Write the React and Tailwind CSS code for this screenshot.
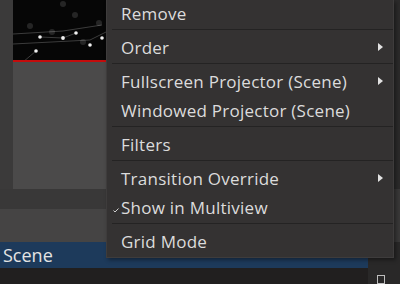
import React from 'react';

const items = [
  { label: 'Remove' },
  { sep: true },
  { label: 'Order', sub: true },
  { sep: true },
  { label: 'Fullscreen Projector (Scene)', sub: true },
  { label: 'Windowed Projector (Scene)' },
  { sep: true },
  { label: 'Filters' },
  { sep: true },
  { label: 'Transition Override', sub: true },
  { label: 'Show in Multiview', checked: true },
  { sep: true },
  { label: 'Grid Mode' },
];

const Preview = () => (
  <svg width="93" height="60" viewBox="0 0 93 60" className="block">
    <rect width="93" height="60" fill="#060606" />
    <g stroke="#5a5a5a" strokeWidth="0.8" fill="none" opacity="0.8">
      <path d="M0 44 L77 40 L93 32" />
      <path d="M0 34 L50 31 L89 25" />
      <path d="M23 51 L10 62" />
      <path d="M27 37 L50 38 L63 33" />
    </g>
    <g fill="#ffffff" opacity="0.12">
      <circle cx="17" cy="26" r="3" />
      <circle cx="39" cy="32" r="3" />
      <circle cx="62" cy="15" r="3" />
      <circle cx="86" cy="23" r="3" />
      <circle cx="50" cy="4" r="3" />
      <circle cx="70" cy="42" r="3" />
    </g>
    <g fill="#f0f0f0">
      <circle cx="27" cy="37" r="1.8" />
      <circle cx="50" cy="38" r="1.9" />
      <circle cx="63" cy="33" r="1.8" />
      <circle cx="89" cy="38" r="1.8" />
      <circle cx="77" cy="45" r="1.8" />
      <circle cx="23" cy="51" r="1.8" />
    </g>
  </svg>
);

const Arrow = () => (
  <svg width="5" height="8" viewBox="0 0 5 8" className="block">
    <path d="M0 0 L5 4 L0 8 Z" fill="#e2e2e2" />
  </svg>
);

const Check = () => (
  <svg width="6" height="5" viewBox="0 0 6 5" className="block">
    <path d="M0.5 2.5 L2 4 L5.5 0.5" stroke="#d0d0d0" strokeWidth="1" fill="none" />
  </svg>
);

const ContextMenu = () => (
  <div className="absolute left-[106px] top-0 w-[288px] h-[258px] bg-[#343232] border-l border-r border-b border-[#3e3c3c] shadow-[2px_2px_4px_rgba(0,0,0,0.4)]">
    {items.map((item, i) =>
      item.sep ? (
        <div key={i} className="h-[5px] pl-[5px]">
          <div className="h-px bg-[#242323]" />
        </div>
      ) : (
        <div key={i} className="relative h-[29px] flex items-center pl-[14px] pr-[10px] text-[17px] tracking-[0.25px] text-[#dcdcdc]">
          {item.checked && (
            <div className="absolute left-[6px] top-[14px]">
              <Check />
            </div>
          )}
          <span className="flex-1 leading-none -mt-[2px]">{item.label}</span>
          {item.sub && (
            <div className="-mt-[4px]">
              <Arrow />
            </div>
          )}
        </div>
      )
    )}
  </div>
);

export default function App() {
  return (
    <div className="relative w-[400px] h-[284px] overflow-hidden bg-[#2c2b2b] font-['Open_Sans','Noto_Sans',sans-serif]">
      <div className="flex flex-col h-full">
        <div className="flex h-[189px]">
          <div className="w-[13px] bg-[#3b3a3a]" />
          <div className="w-[380px] flex flex-col">
            <div className="h-[60px] bg-[#060606]">
              <Preview />
            </div>
            <div className="h-[2px] bg-[#c40c0c]" />
            <div className="flex-1 bg-[#4b4a4a]" />
          </div>
          <div className="flex-1 bg-[#2b2a2a]" />
        </div>
        <div className="h-[20px] bg-[#393838]" />
        <div className="h-[33px] flex">
          <div className="w-[106px] bg-[#454444]" />
          <div className="flex-1 bg-[#393838]" />
        </div>
        <div className="h-[26px] flex">
          <div className="w-[368px] bg-[#1d3a5b] flex items-center pl-[3px] text-[18px] text-[#e4e4e4] leading-none">
            <span className="-mt-[1px]">Scene</span>
          </div>
          <div className="flex-1 bg-[#292828] flex flex-col items-center pt-[15px]">
            <div className="w-[10px] h-px bg-[#9a9a9a]" />
          </div>
        </div>
        <div className="flex-1 flex">
          <div className="w-[368px] bg-[#211f1f]" />
          <div className="flex-1 bg-[#292828] flex pl-[9px] pt-[7px]">
            <div className="w-[8px] h-[9px] border border-[#bdbdbd]" />
          </div>
        </div>
      </div>
      <ContextMenu />
    </div>
  );
}
